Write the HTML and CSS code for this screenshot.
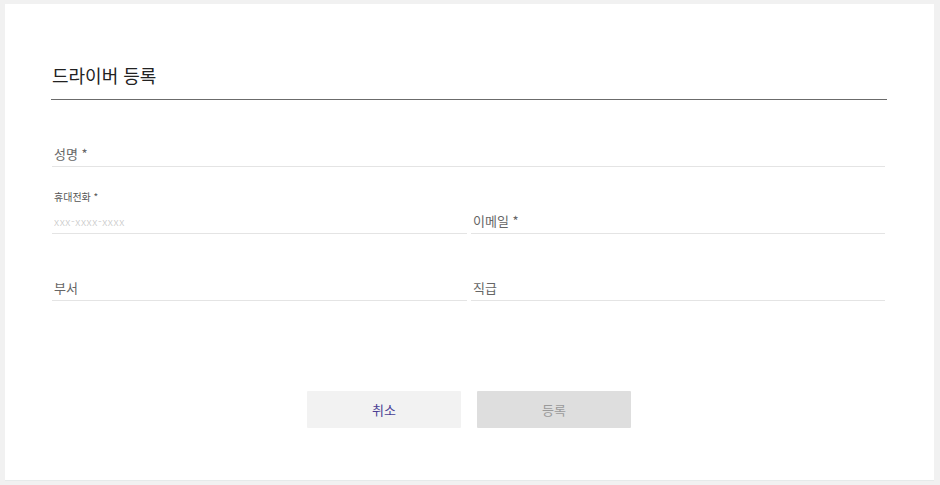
FILE: index.html
```html
<!DOCTYPE html>
<html lang="ko">
<head>
<meta charset="utf-8">
<title>드라이버 등록</title>
<link rel="stylesheet" href="styles.css">
</head>
<body>
<div class="card">
  <h1 class="title">드라이버 등록</h1>
  <form class="form">
    <div class="row row-1">
      <div class="field full">
        <input class="input" type="text" placeholder="성명 *">
      </div>
    </div>
    <div class="row row-2">
      <div class="field">
        <label class="small-label">휴대전화 *</label>
        <input class="input small-ph" type="text" placeholder="xxx-xxxx-xxxx">
      </div>
      <div class="field">
        <input class="input" type="text" placeholder="이메일 *">
      </div>
    </div>
    <div class="row row-3">
      <div class="field">
        <input class="input" type="text" placeholder="부서">
      </div>
      <div class="field">
        <input class="input" type="text" placeholder="직급">
      </div>
    </div>
    <div class="actions">
      <button type="button" class="btn btn-cancel">취소</button>
      <button type="button" class="btn btn-submit" disabled>등록</button>
    </div>
  </form>
</div>
</body>
</html>
```

FILE: styles.css
```css
* { box-sizing: border-box; }
html, body { margin: 0; padding: 0; }
body {
  background: #f1f1f1;
  font-family: "Noto Sans CJK KR", "Noto Sans", sans-serif;
  width: 940px;
  height: 485px;
  overflow: hidden;
  padding: 4px 0 0 5px;
}
.card {
  width: 929px;
  height: 477px;
  background: #fff;
  border-bottom: 1px solid #e6eaea;
  padding: 59px 47px 0 46px;
}
.title {
  margin: 0;
  font-size: 18px;
  line-height: 24px;
  font-weight: 400;
  color: #222;
  padding: 0 0 12px 1px;
  border-bottom: 1px solid #6b6b6b;
}
.form {
  padding: 0 2px 0 1px;
}
.row {
  display: grid;
  grid-template-columns: 415px 414px;
  column-gap: 4px;
  align-items: end;
}
.row-1 { grid-template-columns: 1fr; margin-top: 43px; }
.row-2 { margin-top: 23px; }
.row-3 { margin-top: 43px; }
.field {
  display: flex;
  flex-direction: column;
  justify-content: flex-end;
}
.small-label {
  font-size: 10px;
  line-height: 14px;
  color: #555;
  padding-left: 2px;
  margin-bottom: 6px;
}
.input {
  display: block;
  width: 100%;
  border: 0;
  border-bottom: 1px solid #e4e4e4;
  outline: none;
  background: transparent;
  font-family: inherit;
  font-size: 13px;
  font-weight: 400;
  line-height: 20px;
  height: 24px;
  padding: 0 0 2px 2px;
  color: #555;
}
.input::placeholder { color: #666; opacity: 1; }
.input.small-ph::placeholder { color: #c4c4c4; font-size: 11px; letter-spacing: 0.6px; font-weight: 300; }
.actions {
  display: flex;
  justify-content: center;
  gap: 16px;
  margin-top: 90px;
  padding-left: 1px;
}
.btn {
  width: 154px;
  height: 37px;
  border: 0;
  border-radius: 1px;
  font-family: inherit;
  font-size: 13px;
  cursor: pointer;
}
.btn-cancel { background: #f2f2f2; color: #4b3f94; }
.btn-submit { background: #dedede; color: #9a9a9a; cursor: default; }
```
